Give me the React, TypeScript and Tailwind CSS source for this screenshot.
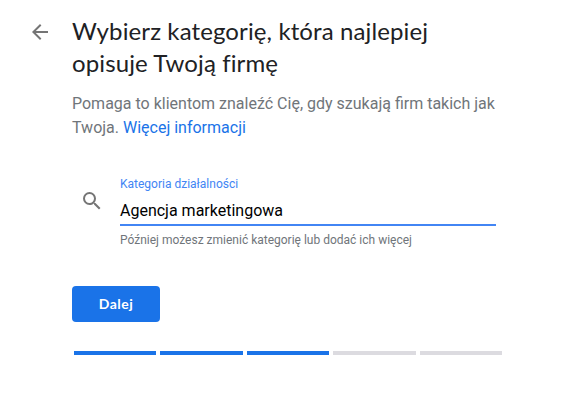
// Krok kreatora: wybór kategorii firmy
const STEPS = [true, true, true, false, false];

export default function App() {
  return (
    <div className="h-[402px] w-[568px] overflow-hidden bg-white font-['Roboto',sans-serif]">
      <div className="flex pt-[15px]">
        <div className="w-[72px] pl-[28px] pt-[5px]">
          <svg width="24" height="24" viewBox="0 0 24 24" className="fill-[#757575]">
            <path d="M20 11H7.83l5.59-5.59L12 4l-8 8 8 8 1.41-1.41L7.83 13H20v-2z" />
          </svg>
        </div>
        <div className="w-[440px]">
          <h1 className="font-['Lato',sans-serif] text-[24px] leading-[32px] font-normal tracking-[0.11px] text-[#202124]">
            Wybierz kategorię, która najlepiej
            <br />
            opisuje Twoją firmę
          </h1>
          <p className="mt-[13px] text-[16px] leading-[24px] text-[#70757a]">
            Pomaga to klientom znaleźć Cię, gdy szukają firm takich jak
            <br />
            Twoja. <span className="text-[#1a73e8]">Więcej informacji</span>
          </p>
        </div>
      </div>

      <div className="mt-[36px] flex">
        <div className="w-[120px] pl-[80px] pt-[13px]">
          <svg width="24" height="24" viewBox="0 0 24 24" className="fill-[#757575]">
            <path d="M15.5 14h-.79l-.28-.27A6.471 6.471 0 0 0 16 9.5 6.5 6.5 0 1 0 9.5 16c1.61 0 3.09-.59 4.23-1.57l.27.28v.79l5 4.99L20.49 19l-4.99-5zm-6 0C7.01 14 5 11.99 5 9.5S7.01 5 9.5 5 14 7.01 14 9.5 11.99 14 9.5 14z" />
          </svg>
        </div>
        <div className="w-[376px]">
          <div className="text-[12px] leading-[16px] text-[#4285f4]">Kategoria działalności</div>
          <div className="mt-[7px] border-b-2 border-[#4285f4] pb-[1px] text-[16px] leading-[24px] text-black">
            Agencja marketingowa
          </div>
          <div className="mt-[6px] text-[12px] leading-[16px] text-[#70757a]">
            Później możesz zmienić kategorię lub dodać ich więcej
          </div>
        </div>
      </div>

      <div className="mt-[38px] pl-[72px]">
        <button
          type="button"
          className="h-[36px] w-[88px] rounded-[4px] bg-[#1a73e8] pb-[1px] font-['Lato',sans-serif] text-[14px] font-bold tracking-[0.5px] text-white"
        >
          Dalej
        </button>
      </div>

      <div className="mt-[29px] ml-[74px] flex w-[428px] gap-[4px]">
        {STEPS.map((done, i) => (
          <div key={i} className={`h-[4px] flex-1 ${done ? 'bg-[#1a73e8]' : 'bg-[#dcdbe0]'}`} />
        ))}
      </div>
    </div>
  );
}
